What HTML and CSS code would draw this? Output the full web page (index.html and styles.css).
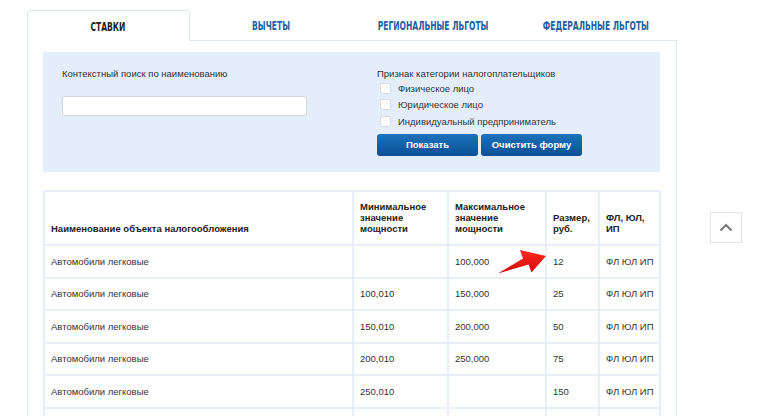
FILE: index.html
```html
<!DOCTYPE html>
<html lang="ru">
<head>
<meta charset="utf-8">
<link rel="stylesheet" href="styles.css">
</head>
<body>
<div class="page">
  <div class="tabs">
    <div class="tab active"><span>СТАВКИ</span></div>
    <div class="tab"><span>ВЫЧЕТЫ</span></div>
    <div class="tab"><span>РЕГИОНАЛЬНЫЕ ЛЬГОТЫ</span></div>
    <div class="tab"><span>ФЕДЕРАЛЬНЫЕ ЛЬГОТЫ</span></div>
  </div>
  <div class="panel">
    <div class="filter">
      <div class="col-left">
        <div class="label">Контекстный поиск по наименованию</div>
        <input class="search" type="text">
      </div>
      <div class="col-right">
        <div class="label">Признак категории налогоплательщиков</div>
        <label class="check"><span class="box"></span>Физическое лицо</label>
        <label class="check"><span class="box"></span>Юридическое лицо</label>
        <label class="check"><span class="box"></span>Индивидуальный предприниматель</label>
        <div class="buttons">
          <button class="btn">Показать</button>
          <button class="btn">Очистить форму</button>
        </div>
      </div>
    </div>
    <table class="rates">
      <colgroup>
        <col class="c1"><col class="c2"><col class="c3"><col class="c4"><col class="c5">
      </colgroup>
      <thead>
        <tr>
          <th>Наименование объекта налогообложения</th>
          <th>Минимальное значение мощности</th>
          <th>Максимальное значение мощности</th>
          <th>Размер, руб.</th>
          <th>ФЛ, ЮЛ, ИП</th>
        </tr>
      </thead>
      <tbody>
        <tr><td>Автомобили легковые</td><td></td><td>100,000</td><td>12</td><td>ФЛ ЮЛ ИП</td></tr>
        <tr><td>Автомобили легковые</td><td>100,010</td><td>150,000</td><td>25</td><td>ФЛ ЮЛ ИП</td></tr>
        <tr><td>Автомобили легковые</td><td>150,010</td><td>200,000</td><td>50</td><td>ФЛ ЮЛ ИП</td></tr>
        <tr><td>Автомобили легковые</td><td>200,010</td><td>250,000</td><td>75</td><td>ФЛ ЮЛ ИП</td></tr>
        <tr><td>Автомобили легковые</td><td>250,010</td><td></td><td>150</td><td>ФЛ ЮЛ ИП</td></tr>
        <tr><td>&nbsp;</td><td></td><td></td><td></td><td></td></tr>
      </tbody>
    </table>
  </div>
</div>
<div class="to-top">
  <svg width="14" height="9" viewBox="0 0 14 9"><path d="M1.5 7.5 L7 2 L12.5 7.5" fill="none" stroke="#7a7a7a" stroke-width="2.2"/></svg>
</div>
<svg class="arrow" width="56" height="34" viewBox="0 0 56 34">
  <defs>
    <linearGradient id="ag" x1="0" y1="0" x2="0" y2="1">
      <stop offset="0" stop-color="#ff2a1f"/>
      <stop offset="1" stop-color="#d10a0a"/>
    </linearGradient>
  </defs>
  <path d="M3 28.5 L28 13.5 L25 5 L51 11 L36.5 27.5 L33.5 19.5 Z" fill="url(#ag)"/>
</svg>
</body>
</html>
```
FILE: styles.css
```css
* { box-sizing: border-box; }
html, body { margin: 0; padding: 0; background: #fff; }
html { height: 416px; overflow: hidden; }
body {
  font-family: "Liberation Sans", Arial, sans-serif;
  font-size: 9.5px;
  color: #333;
  height: 416px;
  overflow: hidden;
  position: relative;
}
.page {
  padding: 10px 0 0 27px;
  width: 677px;
  height: 416px;
}
.tabs {
  display: flex;
  height: 30px;
}
.tab {
  width: 163px;
  display: flex;
  align-items: center;
  justify-content: center;
  font-family: "DejaVu Sans", sans-serif;
  font-stretch: condensed;
  font-weight: bold;
  font-size: 12px;
  color: #22609f;
  padding-top: 1px;
  white-space: nowrap;
}
.tab span {
  display: inline-block;
  transform: scaleX(0.7);
}
.tab.active {
  color: #222;
  background: #fff;
  border: 1px solid #dfe7f1;
  border-bottom: none;
  border-radius: 4px 4px 0 0;
  position: relative;
  margin-bottom: -1px;
  height: 31px;
  z-index: 1;
}
.panel {
  border: 1px solid #dfe7f1;
  border-bottom: none;
  padding: 11px 16px 0 15px;
  height: 376px;
  overflow: hidden;
}
.filter {
  background: #e3eefa;
  height: 120px;
  display: grid;
  grid-template-columns: 315px 1fr;
  padding: 15px 0 0 19px;
}
.label {
  line-height: 13px;
  color: #333;
}
.col-left .label { margin-bottom: 16px; }
.search {
  display: block;
  width: 245px;
  height: 20px;
  border: 1px solid #d4d9df;
  border-radius: 2px;
  background: #fff;
  margin: 0;
  padding: 0;
}
.check {
  display: flex;
  align-items: center;
  height: 16.5px;
  padding-left: 3px;
}
.box {
  width: 11px;
  height: 11px;
  background: #fff;
  border: 1px solid #d6dce3;
  border-radius: 2px;
  margin-right: 7px;
}
.buttons {
  display: flex;
  gap: 3px;
  margin-top: 4px;
}
.btn {
  width: 101px;
  height: 22px;
  border: none;
  border-radius: 3px;
  background: linear-gradient(#1c72bb, #0b4f96);
  color: #fff;
  font-family: "Liberation Sans", Arial, sans-serif;
  font-weight: bold;
  font-size: 9.5px;
  padding: 0;
}
.rates {
  margin-top: 18px;
  width: 616px;
  border-collapse: collapse;
  table-layout: fixed;
}
.c1 { width: 309px; }
.c2 { width: 95px; }
.c3 { width: 98px; }
.c4 { width: 53px; }
.c5 { width: 61px; }
.rates th, .rates td {
  border: 2px solid #e8eff7;
  text-align: left;
  padding: 0 4px 0 6px;
}
.rates th {
  font-weight: bold;
  font-size: 9.5px;
  line-height: 11px;
  color: #222;
  vertical-align: bottom;
  height: 54px;
  padding-bottom: 10px;
}
.rates td {
  height: 32.5px;
  color: #333;
  font-size: 9.5px;
  vertical-align: middle;
  white-space: nowrap;
}
.to-top {
  position: absolute;
  left: 710px;
  top: 212px;
  width: 32px;
  height: 31px;
  border: 1px solid #e4e4e4;
  background: #fff;
  display: flex;
  align-items: center;
  justify-content: center;
}
.arrow {
  position: absolute;
  left: 495px;
  top: 245px;
}
```
